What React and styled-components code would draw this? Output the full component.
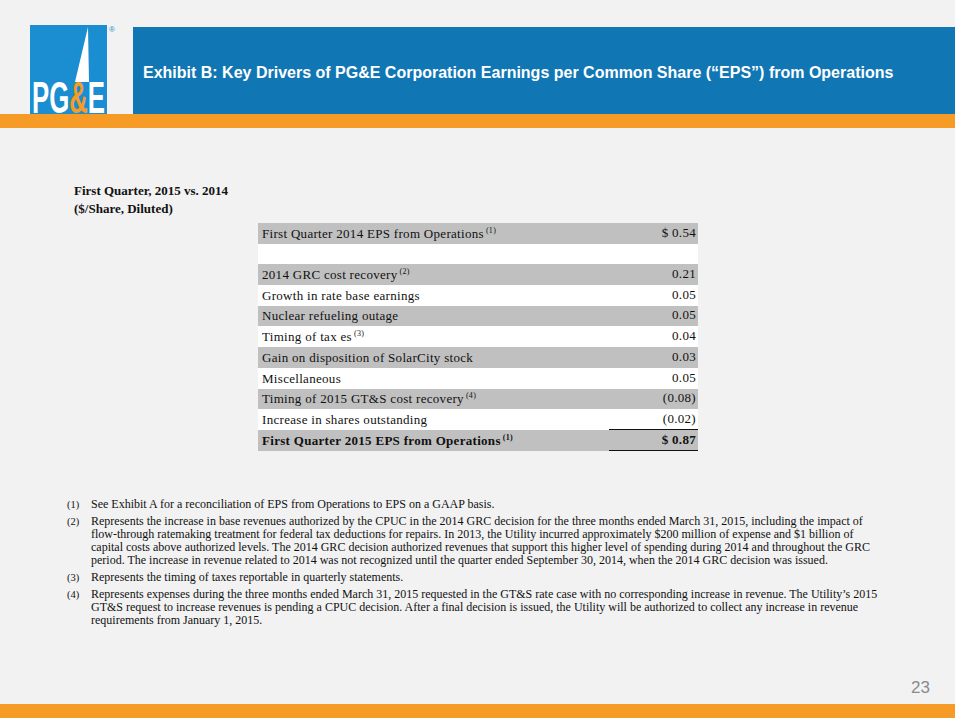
import React from 'react'
import styled, { createGlobalStyle } from 'styled-components'

const GlobalStyle = createGlobalStyle`
  html, body {
    margin: 0;
    padding: 0;
    background: #f2f2f2;
  }
`

const Page = styled.div`
  width: 955px;
  height: 718px;
  background: #f2f2f2;
  display: flex;
  flex-direction: column;
  overflow: hidden;
`
const Header = styled.header`
  display: flex;
  align-items: flex-end;
  padding-top: 25px;
`
const LogoWrap = styled.div`
  position: relative;
  margin-left: 30px;
  width: 77px;
  height: 89px;

  svg {
    display: block;
  }
`
const Registered = styled.span`
  position: absolute;
  left: 79px;
  top: 0px;
  font-family: "Liberation Sans", Arial, sans-serif;
  font-size: 8px;
  color: #1a8ed1;
`
const TitleBand = styled.div`
  flex: 1;
  margin-left: 26px;
  height: 87px;
  background: #1176b4;
  display: flex;
  align-items: center;
  padding: 4px 0 0 10px;
  box-sizing: border-box;
`
const Title = styled.h1`
  margin: 0;
  font-family: "Liberation Sans", Arial, sans-serif;
  font-weight: bold;
  font-size: 16px;
  color: #ffffff;
  white-space: nowrap;
`
const OrangeBar = styled.div`
  height: ${props => props.h}px;
  background: #f59b26;
`
const Content = styled.main`
  flex: 1;
  display: flex;
  flex-direction: column;
`
const SubTitle = styled.div`
  margin: 54px 0 0 74px;
  font-family: "Liberation Serif", "Times New Roman", serif;
  font-weight: bold;
  font-size: 13px;
  line-height: 18px;
  color: #111;
`
const Table = styled.div`
  margin: 5px 0 0 258px;
  width: 440px;
  display: flex;
  flex-direction: column;
  font-family: "Liberation Serif", "Times New Roman", serif;
  font-size: 13px;
  letter-spacing: 0.3px;
  color: #111;
`
const Row = styled.div`
  display: flex;
  height: 20.7px;
  align-items: flex-end;
  background: ${props => (props.shaded ? '#c0c0c0' : '#ffffff')};
  font-weight: ${props => (props.bold ? 'bold' : 'normal')};
`
const Label = styled.div`
  flex: 1;
  padding: 0 0 2px 4px;
  white-space: nowrap;
`
const Value = styled.div`
  width: 89px;
  box-sizing: border-box;
  height: 100%;
  display: flex;
  align-items: flex-end;
  justify-content: flex-end;
  padding: 0 2px 2px 0;
  border-bottom: ${props => (props.underline ? '1px solid #111' : '1px solid transparent')};
`
const Sup = styled.sup`
  font-size: 8px;
  vertical-align: 5px;
  line-height: 0;
  margin-left: 2px;
`
const Notes = styled.ol`
  list-style: none;
  margin: 47px 0 0 0;
  padding: 0 0 0 67px;
  font-family: "Liberation Serif", "Times New Roman", serif;
  font-size: 12px;
  line-height: 13px;
  color: #111;
`
const Note = styled.li`
  display: flex;
  margin-bottom: 4px;
`
const NoteNum = styled.span`
  width: 24px;
  flex-shrink: 0;
  font-size: 10.5px;
`
const NoteText = styled.span`
  white-space: nowrap;
`
const Footer = styled.footer`
  margin-top: auto;
  display: flex;
  justify-content: flex-end;
  padding: 0 25px 6px 0;
`
const PageNum = styled.span`
  font-family: "Liberation Sans", Arial, sans-serif;
  font-size: 17px;
  color: #8a8a8a;
`

const Logo = () => (
  <svg width="77" height="89" viewBox="0 0 77 89">
    <rect x="0" y="0" width="77" height="89" fill="#1a8ed1" />
    <polygon points="58,2 59,57 45,57" fill="#ffffff" />
    <text
      x="2"
      y="88"
      fontFamily="Liberation Sans, Arial, sans-serif"
      fontWeight="bold"
      fontSize="45"
      textLength="73"
      lengthAdjust="spacingAndGlyphs"
      fill="#ffffff"
    >
      PG<tspan fill="#f59b26">&amp;</tspan>E
    </text>
  </svg>
)

const rows = [
  { label: 'First Quarter 2014 EPS from Operations', note: '(1)', value: '$ 0.54', shaded: true },
  { label: '', value: '' },
  { label: '2014 GRC cost recovery', note: '(2)', value: '0.21', shaded: true },
  { label: 'Growth in rate base earnings', value: '0.05' },
  { label: 'Nuclear refueling outage', value: '0.05', shaded: true },
  { label: 'Timing of tax es', note: '(3)', value: '0.04' },
  { label: 'Gain on disposition of SolarCity stock', value: '0.03', shaded: true },
  { label: 'Miscellaneous', value: '0.05' },
  { label: 'Timing of 2015 GT&S cost recovery', note: '(4)', value: '(0.08)', shaded: true },
  { label: 'Increase in shares outstanding', value: '(0.02)', underline: true },
  { label: 'First Quarter 2015 EPS from Operations', note: '(1)', value: '$ 0.87', shaded: true, bold: true, underline: true },
]

const notes = [
  ['See Exhibit A for a reconciliation of EPS from Operations to EPS on a GAAP basis.'],
  [
    'Represents the increase in base revenues authorized by the CPUC in the 2014 GRC decision for the three months ended March 31, 2015, including the impact of',
    'flow-through ratemaking treatment for federal tax deductions for repairs. In 2013, the Utility incurred approximately $200 million of expense and $1 billion of',
    'capital costs above authorized levels. The 2014 GRC decision authorized revenues that support this higher level of spending during 2014 and throughout the GRC',
    'period. The increase in revenue related to 2014 was not recognized until the quarter ended September 30, 2014, when the 2014 GRC decision was issued.',
  ],
  ['Represents the timing of taxes reportable in quarterly statements.'],
  [
    'Represents expenses during the three months ended March 31, 2015 requested in the GT&S rate case with no corresponding increase in revenue. The Utility\u2019s 2015',
    'GT&S request to increase revenues is pending a CPUC decision. After a final decision is issued, the Utility will be authorized to collect any increase in revenue',
    'requirements from January 1, 2015.',
  ],
]

export default function App() {
  return (
    <Page>
      <GlobalStyle />
      <Header>
        <LogoWrap>
          <Logo />
          <Registered>®</Registered>
        </LogoWrap>
        <TitleBand>
          <Title>Exhibit B: Key Drivers of PG&amp;E Corporation Earnings per Common Share (“EPS”) from Operations</Title>
        </TitleBand>
      </Header>
      <OrangeBar h={14} />
      <Content>
        <SubTitle>
          First Quarter, 2015 vs. 2014
          <br />
          ($/Share, Diluted)
        </SubTitle>
        <Table>
          {rows.map((row, i) => (
            <Row key={i} shaded={row.shaded} bold={row.bold}>
              <Label>
                {row.label}
                {row.note ? <Sup>{row.note}</Sup> : null}
              </Label>
              <Value underline={row.underline}>{row.value}</Value>
            </Row>
          ))}
        </Table>
        <Notes>
          {notes.map((lines, i) => (
            <Note key={i}>
              <NoteNum>({i + 1})</NoteNum>
              <NoteText>
                {lines.map((line, j) => (
                  <React.Fragment key={j}>
                    {j > 0 ? <br /> : null}
                    {line}
                  </React.Fragment>
                ))}
              </NoteText>
            </Note>
          ))}
        </Notes>
        <Footer>
          <PageNum>23</PageNum>
        </Footer>
      </Content>
      <OrangeBar h={14} />
    </Page>
  )
}
